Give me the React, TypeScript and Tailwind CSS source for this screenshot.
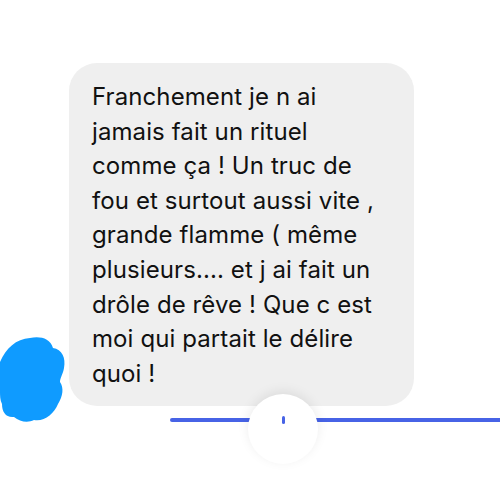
export default function App() {
  const lines = [
    "Franchement je n ai",
    "jamais fait un rituel",
    "comme ça ! Un truc de",
    "fou et surtout aussi vite ,",
    "grande flamme ( même",
    "plusieurs.... et j ai fait un",
    "drôle de rêve ! Que c est",
    "moi qui partait le délire",
    "quoi !",
  ];

  return (
    <div className="relative w-[500px] h-[500px] overflow-hidden bg-white font-['Inter',sans-serif]">
      {/* Message bubble */}
      <div className="ml-[69px] mt-[63px] w-[345px] rounded-[28px] bg-[#efefef] pl-[23px] pr-[12px] pt-[17px] pb-[15px] text-[24px] leading-[34.6px] text-[#111111] tracking-[0.1px]">
        {lines.map((line) => (
          <div key={line} className="whitespace-nowrap">
            {line}
          </div>
        ))}
      </div>

      {/* Scribbled avatar */}
      <svg
        className="absolute left-0 top-[334px]"
        width="70"
        height="90"
        viewBox="0 0 70 90"
      >
        <path
          d="M0 28 C6 14 16 5 30 4 C40 2 50 4 53 14 C62 15 66 24 64 34 C63 40 60 44 60 48 C64 54 63 62 58 70 C54 80 44 88 34 86 C28 89 20 88 14 83 C6 84 2 78 2 70 C0 66 0 62 0 56 Z"
          fill="#0f9bff"
        />
      </svg>

      {/* Bottom bar with button */}
      <div className="ml-[170px] mt-[12px] h-[4px] rounded-l-full bg-[#4763e6]" />
      <div className="absolute left-[248px] top-[394px] flex h-[70px] w-[70px] items-start justify-center rounded-full bg-white pt-[22px] shadow-[0_-3px_12px_rgba(0,0,0,0.08)]">
        <div className="h-[8px] w-[3px] rounded-full bg-[#4763e6]" />
      </div>
    </div>
  );
}
